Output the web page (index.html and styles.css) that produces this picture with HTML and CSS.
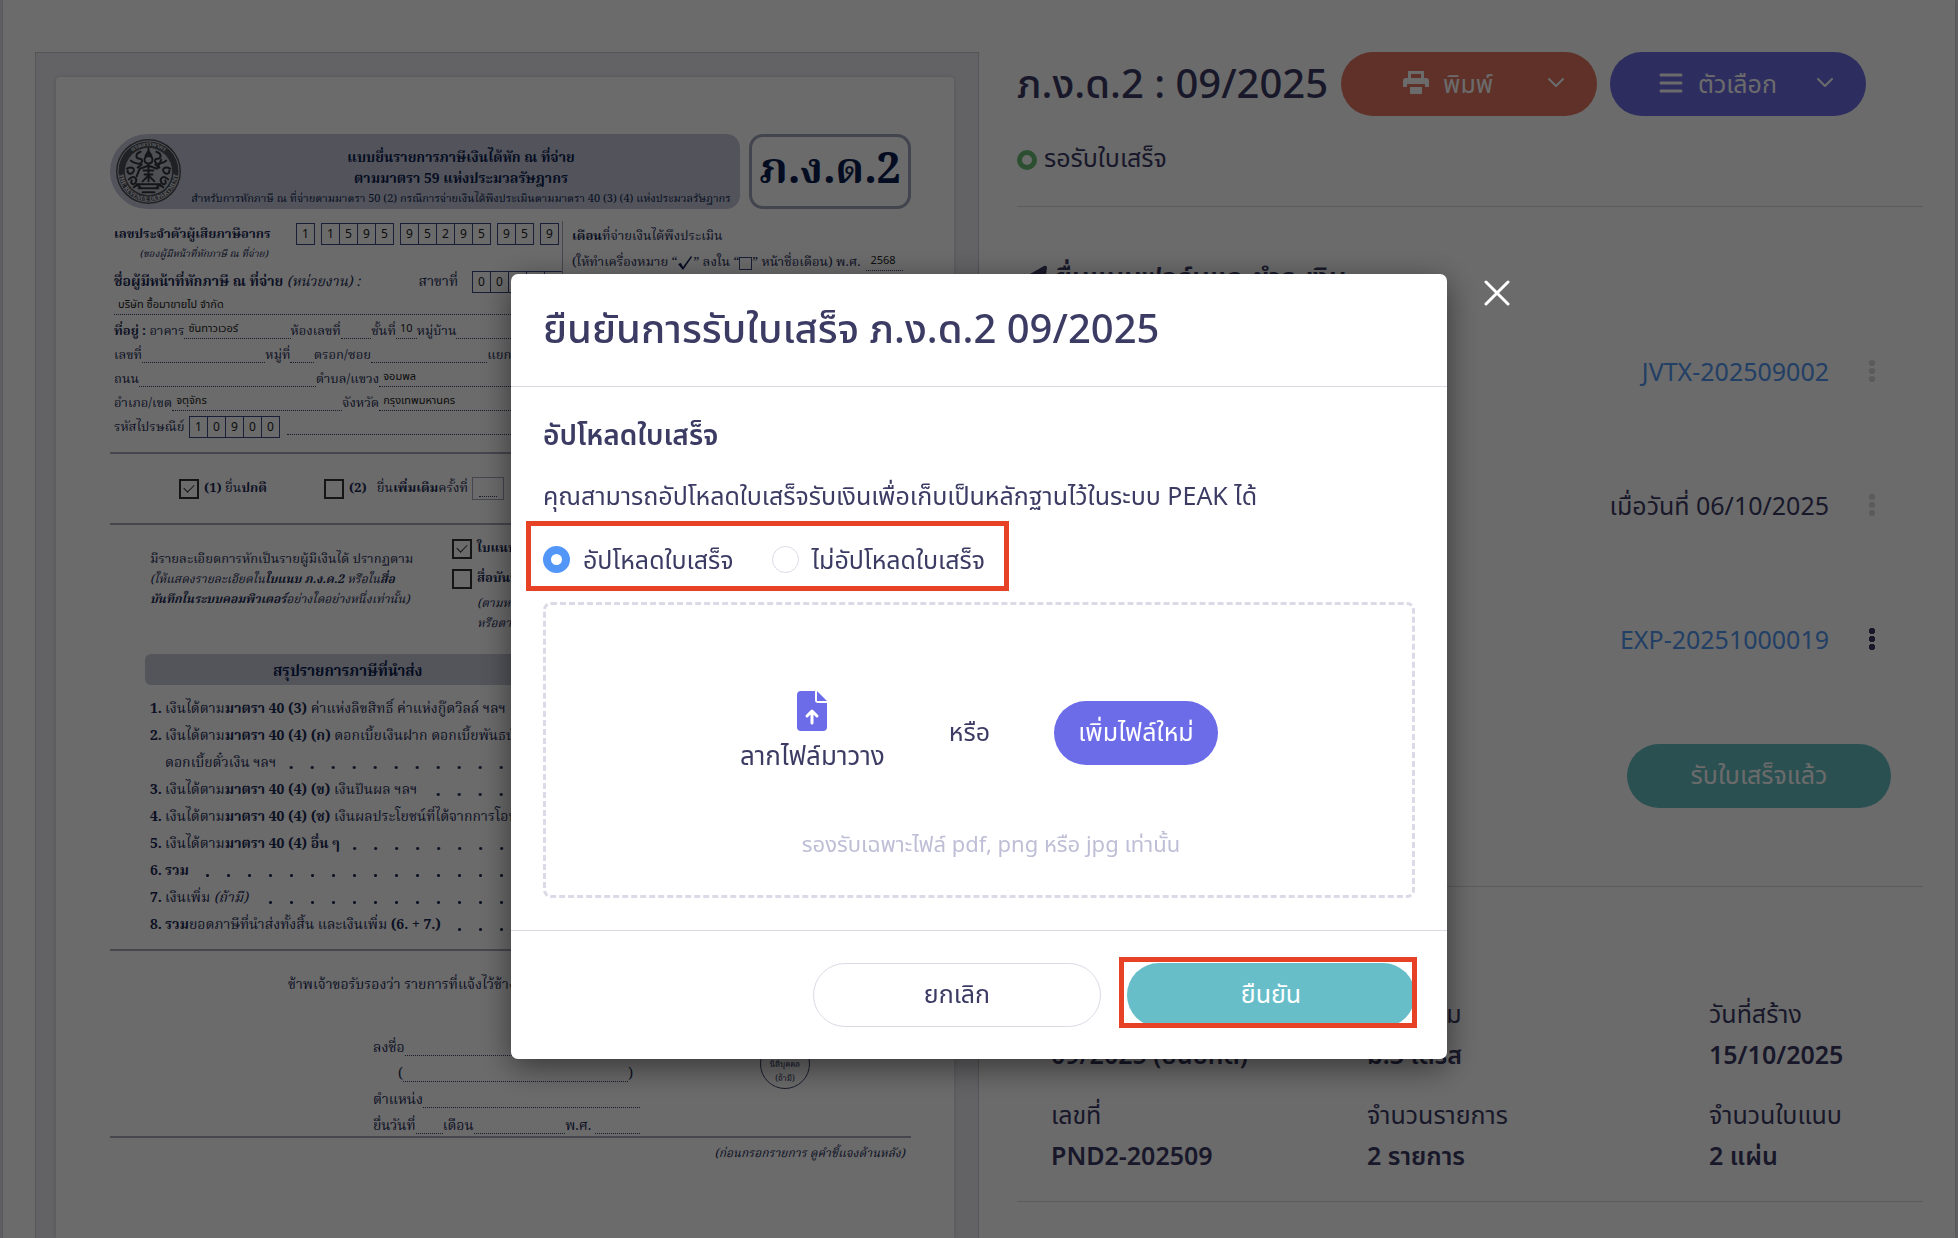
FILE: index.html
```html
<!DOCTYPE html>
<html lang="th">
<head>
    <meta charset="UTF-8">
    <meta name="viewport" content="width=device-width, initial-scale=1.0">
    <title>ภ.ง.ด.2 : 09/2025</title>
    <link rel="stylesheet" href="styles.css">
</head>
<body>
    <main class="page">
        <section class="preview">
            <article class="paper">
                <header class="form-head">
                    <div class="form-band">
                        <svg class="seal" viewBox="0 0 68 68">
                            <circle cx="34" cy="34" r="33" fill="#4d5058"/>
                            <circle cx="34" cy="34" r="31" fill="none" stroke="#c5c8d2" stroke-width="1"/>
                            <circle cx="34" cy="34" r="24" fill="#b9bcc6"/>
                            <path id="arcTop" d="M8 34a26 26 0 0 1 52 0" fill="none"/>
                            <path id="arcBottom" d="M4 34a30 30 0 0 0 60 0" fill="none"/>
                            <text class="seal-text"><textPath href="#arcTop" startOffset="50%">กรมสรรพากร</textPath></text>
                            <text class="seal-text"><textPath href="#arcBottom" startOffset="50%">THE REVENUE DEPARTMENT</textPath></text>
                            <g fill="none" stroke="#30333b" stroke-width="2" stroke-linecap="round">
                                <path d="M34 11v6M31 18l3-5 3 5M30 22c0-5 8-5 8 0s-8 5-8 0M34 27v17M26 31l8-3 8 3M25 31l-3 8M43 31l4-9"/>
                                <path d="M28 44l6-6 6 6M24 51h20M22 47h24M28 55h12M29 33h10M30 37h8M27 27l-4 3M41 27l4 3"/>
                                <path d="M26 14c-6 2-5 7-1 7s3 6-2 5-7-3-7-3M42 14c6 2 5 7 1 7s-3 6 2 5 7-3 7-3"/>
                                <path d="M12 31c6-3 9 1 6 4s-6 0-5-2M56 31c-6-3-9 1-6 4s6 0 5-2M14 42c5-5 9-1 7 3s-6 1-4-2M54 42c-5-5-9-1-7 3s6 1 4-2M19 50c3-3 6-2 7 1M49 50c-3-3-6-2-7 1"/>
                            </g>
                        </svg>
                        <div class="form-title">
                            <strong>แบบยื่นรายการภาษีเงินได้หัก ณ ที่จ่าย</strong>
                            <strong>ตามมาตรา 59 แห่งประมวลรัษฎากร</strong>
                            <small>สำหรับการหักภาษี ณ ที่จ่ายตามมาตรา 50 (2) กรณีการจ่ายเงินได้พึงประเมินตามมาตรา 40 (3) (4) แห่งประมวลรัษฎากร</small>
                        </div>
                    </div>
                    <div class="form-code">ภ.ง.ด.2</div>
                </header>

                <div class="form-top">
                    <div class="payer">
                        <div class="tax-id">
                            <div class="tax-label">
                                <b>เลขประจำตัวผู้เสียภาษีอากร</b>
                                <i>(ของผู้มีหน้าที่หักภาษี ณ ที่จ่าย)</i>
                            </div>
                            <span class="digits"><span>1</span></span>
                            <span class="digits"><span>1</span><span>5</span><span>9</span><span>5</span></span>
                            <span class="digits"><span>9</span><span>5</span><span>2</span><span>9</span><span>5</span></span>
                            <span class="digits"><span>9</span><span>5</span></span>
                            <span class="digits"><span>9</span></span>
                        </div>
                        <div class="payer-name">
                            <span><b>ชื่อผู้มีหน้าที่หักภาษี ณ ที่จ่าย</b> <i>(หน่วยงาน) :</i></span>
                            <span class="branch">สาขาที่</span>
                            <span class="digits"><span>0</span><span>0</span><span>0</span><span>0</span><span>0</span></span>
                        </div>
                        <div class="line"><span class="dots filled">บริษัท ซื้อมาขายไป จำกัด</span></div>
                        <div class="line cols-address">
                            <span class="cell"><b>ที่อยู่ :</b>&nbsp;อาคาร<span class="dots filled">ซันทาวเวอร์</span></span>
                            <span class="cell">ห้องเลขที่<span class="dots"></span></span>
                            <span class="cell">ชั้นที่<span class="dots filled">10</span></span>
                            <span class="cell">หมู่บ้าน<span class="dots"></span></span>
                        </div>
                        <div class="line cols-number">
                            <span class="cell">เลขที่<span class="dots"></span></span>
                            <span class="cell">หมู่ที่<span class="dots"></span></span>
                            <span class="cell">ตรอก/ซอย<span class="dots"></span></span>
                            <span class="cell">แยก<span class="dots"></span></span>
                        </div>
                        <div class="line cols-road">
                            <span class="cell">ถนน<span class="dots"></span></span>
                            <span class="cell">ตำบล/แขวง<span class="dots filled">จอมพล</span></span>
                        </div>
                        <div class="line cols-district">
                            <span class="cell">อำเภอ/เขต<span class="dots filled">จตุจักร</span></span>
                            <span class="cell">จังหวัด<span class="dots filled">กรุงเทพมหานคร</span></span>
                        </div>
                        <div class="line cols-post">
                            <span class="cell">รหัสไปรษณีย์</span>
                            <span class="digits"><span>1</span><span>0</span><span>9</span><span>0</span><span>0</span></span>
                            <span class="dots"></span>
                        </div>
                    </div>
                    <div class="month">
                        <p><b>เดือน</b>ที่จ่ายเงินได้พึงประเมิน</p>
                        <p class="month-mark">(ให้ทำเครื่องหมาย “<svg class="tick" viewBox="0 0 16 14"><path d="M1 8l3-1 2 4L14 0l1 1-9 13z" fill="#0b1d50"/></svg>” ลงใน “<span class="square"></span>” หน้าชื่อเดือน) พ.ศ. <span class="dots filled year">2568</span></p>
                    </div>
                </div>

                <div class="filing">
                    <label><input type="checkbox" class="box" checked> <span><b>(1)</b> ยื่น<b>ปกติ</b></span></label>
                    <label><input type="checkbox" class="box"> <span><b>(2)</b> &nbsp; ยื่น<b>เพิ่มเติม</b>ครั้งที่</span></label>
                    <span class="times"><span class="dots"></span></span>
                </div>

                <div class="attach">
                    <div class="attach-note">
                        <p>มีรายละเอียดการหักเป็นรายผู้มีเงินได้ ปรากฏตาม</p>
                        <p><i>(ให้แสดงรายละเอียดใน<b>ใบแนบ ภ.ง.ด.2</b> หรือใน<b>สื่อ</b></i></p>
                        <p><i><b>บันทึกในระบบคอมพิวเตอร์</b>อย่างใดอย่างหนึ่งเท่านั้น)</i></p>
                    </div>
                    <div class="attach-kind">
                        <label><input type="checkbox" class="box" checked> <b>ใบแนบ ภ.ง.ด.2</b></label>
                        <label><input type="checkbox" class="box"> <b>สื่อบันทึก</b></label>
                        <p><i>(ตามหนังสือแสดงความประสงค์ฯ</i></p>
                        <p><i>หรือตามหนังสือข้อตกลงฯ)</i></p>
                    </div>
                </div>

                <h3 class="summary-head">สรุปรายการภาษีที่นำส่ง</h3>
                <ol class="summary">
                    <li><b>1.</b><span>เงินได้ตาม<b>มาตรา 40 (3)</b> ค่าแห่งลิขสิทธิ์ ค่าแห่งกู๊ดวิลล์ ฯลฯ</span><span class="leader"></span></li>
                    <li><b>2.</b><span>เงินได้ตาม<b>มาตรา 40 (4) (ก)</b> ดอกเบี้ยเงินฝาก ดอกเบี้ยพันธบัตร</span></li>
                    <li><b></b><span>ดอกเบี้ยตั๋วเงิน ฯลฯ</span><span class="leader"></span></li>
                    <li><b>3.</b><span>เงินได้ตาม<b>มาตรา 40 (4) (ข)</b> เงินปันผล ฯลฯ</span><span class="leader"></span></li>
                    <li><b>4.</b><span>เงินได้ตาม<b>มาตรา 40 (4) (ช)</b> เงินผลประโยชน์ที่ได้จากการโอนหุ้น</span></li>
                    <li><b>5.</b><span>เงินได้ตาม<b>มาตรา 40 (4) อื่น ๆ</b></span><span class="leader"></span></li>
                    <li><b>6.</b><span><b>รวม</b></span><span class="leader"></span></li>
                    <li><b>7.</b><span>เงินเพิ่ม <i>(ถ้ามี)</i></span><span class="leader"></span></li>
                    <li><b>8.</b><span><b>รวม</b>ยอดภาษีที่นำส่งทั้งสิ้น และเงินเพิ่ม <b>(6. + 7.)</b></span><span class="leader"></span></li>
                </ol>

                <div class="certify">
                    <p class="certify-text">ข้าพเจ้าขอรับรองว่า รายการที่แจ้งไว้ข้างต้นนี้ เป็นรายการที่ถูกต้อง</p>
                    <div class="sign">
                        <div class="sign-lines">
                            <span class="cell">ลงชื่อ<span class="dots"></span></span>
                            <span class="cell indent">(<span class="dots"></span>)</span>
                            <span class="cell">ตำแหน่ง<span class="dots"></span></span>
                            <span class="cell">ยื่นวันที่<span class="dots day"></span>เดือน<span class="dots"></span>พ.ศ.&nbsp;<span class="dots be"></span></span>
                        </div>
                        <div class="stamp"><span>ประทับตรา</span><span>นิติบุคคล</span><span>(ถ้ามี)</span></div>
                    </div>
                </div>
                <p class="form-foot"><i>(ก่อนกรอกรายการ ดูคำชี้แจงด้านหลัง)</i></p>
            </article>
        </section>

        <section class="detail">
            <div class="detail-head">
                <h1>ภ.ง.ด.2 : 09/2025</h1>
                <button type="button" class="btn btn-print">
                    <svg class="icon" viewBox="0 0 26 26"><path d="M5 1h16v8H5zM8 4v4h10V4z" fill="currentColor" fill-rule="evenodd"/><path d="M3 8h20a3 3 0 0 1 3 3v6h-4v-3H4v3H0v-6a3 3 0 0 1 3-3z" fill="currentColor"/><path d="M7 17h12v7H7z" fill="currentColor"/></svg>
                    <span>พิมพ์</span>
                    <svg class="chevron" viewBox="0 0 16 10"><path d="M1 1l7 7 7-7" fill="none" stroke="currentColor" stroke-width="2" stroke-linecap="round" stroke-linejoin="round"/></svg>
                </button>
                <button type="button" class="btn btn-options">
                    <svg class="icon" viewBox="0 0 26 26"><path d="M3 5h20M3 13h20M3 21h20" stroke="currentColor" stroke-width="3" stroke-linecap="round"/></svg>
                    <span>ตัวเลือก</span>
                    <svg class="chevron" viewBox="0 0 16 10"><path d="M1 1l7 7 7-7" fill="none" stroke="currentColor" stroke-width="2" stroke-linecap="round" stroke-linejoin="round"/></svg>
                </button>
            </div>
            <p class="status">รอรับใบเสร็จ</p>

            <div class="steps">
                <h2><svg class="send" viewBox="0 0 24 24"><path d="M0 13L21 1q3-1 3 2l-3 19-8-4-4 5v-7z" fill="currentColor"/></svg>ยื่นแบบฟอร์มและชำระเงิน</h2>
                <div class="step">
                    <span class="step-name">บันทึกภาษีหัก ณ ที่จ่ายรอนำส่งเรียบร้อย</span>
                    <a href="#">JVTX-202509002</a>
                    <button type="button" class="dots-menu" aria-label="เมนู" disabled></button>
                </div>
                <div class="step">
                    <span class="step-name">ยื่นแบบ</span>
                    <span>เมื่อวันที่ 06/10/2025</span>
                    <button type="button" class="dots-menu" aria-label="เมนู" disabled></button>
                </div>
                <div class="step">
                    <span class="step-name">ชำระเงิน</span>
                    <a href="#">EXP-20251000019</a>
                    <button type="button" class="dots-menu" aria-label="เมนู"></button>
                </div>
                <button type="button" class="btn btn-received">รับใบเสร็จแล้ว</button>
            </div>

            <dl class="info">
                <div><dt>งวดภาษี</dt><dd>09/2025 (ยื่นปกติ)</dd></div>
                <div><dt>นำส่งตาม</dt><dd>ม.3 เตรส</dd></div>
                <div><dt>วันที่สร้าง</dt><dd>15/10/2025</dd></div>
                <div><dt>เลขที่</dt><dd>PND2-202509</dd></div>
                <div><dt>จำนวนรายการ</dt><dd>2 รายการ</dd></div>
                <div><dt>จำนวนใบแนบ</dt><dd>2 แผ่น</dd></div>
            </dl>
        </section>
    </main>

    <div class="overlay">
        <form class="modal" role="dialog" aria-labelledby="modalTitle">
            <button type="button" class="close" aria-label="ปิด">
                <svg viewBox="0 0 26 26"><path d="M2 2l22 22M24 2L2 24" stroke="#fff" stroke-width="3" stroke-linecap="round"/></svg>
            </button>
            <header class="modal-head">
                <h2 id="modalTitle">ยืนยันการรับใบเสร็จ ภ.ง.ด.2 09/2025</h2>
            </header>
            <div class="modal-body">
                <h3>อัปโหลดใบเสร็จ</h3>
                <p class="hint">คุณสามารถอัปโหลดใบเสร็จรับเงินเพื่อเก็บเป็นหลักฐานไว้ในระบบ PEAK ได้</p>
                <div class="choices marked">
                    <label><input type="radio" name="upload" value="yes" checked> อัปโหลดใบเสร็จ</label>
                    <label><input type="radio" name="upload" value="no"> ไม่อัปโหลดใบเสร็จ</label>
                </div>
                <div class="dropzone">
                    <div class="drop-row">
                        <div class="drag">
                            <svg viewBox="0 0 30 40"><path d="M4 0h14v9a3 3 0 0 0 3 3h9v24a4 4 0 0 1-4 4H4a4 4 0 0 1-4-4V4a4 4 0 0 1 4-4z" fill="#6c6ce8"/><path d="M20 0l10 10H20z" fill="#6c6ce8"/><path d="M15 32V20M10 25l5-5 5 5" fill="none" stroke="#fff" stroke-width="3" stroke-linecap="round" stroke-linejoin="round"/></svg>
                            <span>ลากไฟล์มาวาง</span>
                        </div>
                        <span class="or">หรือ</span>
                        <button type="button" class="btn btn-file">เพิ่มไฟล์ใหม่</button>
                    </div>
                    <p class="types">รองรับเฉพาะไฟล์ pdf, png หรือ jpg เท่านั้น</p>
                </div>
            </div>
            <footer class="modal-foot">
                <button type="button" class="btn btn-cancel">ยกเลิก</button>
                <div class="marked"><button type="submit" class="btn btn-confirm">ยืนยัน</button></div>
            </footer>
        </form>
    </div>
</body>
</html>
```
FILE: styles.css
```css
*, *::before, *::after {
    box-sizing: border-box;
}
body {
    margin: 0;
    height: 100vh;
    overflow: hidden;
    background-color: #e8e8ee;
    font-family: "Noto Sans", "Noto Sans Thai", sans-serif;
    font-size: 25px;
    line-height: 40px;
    color: #3b3b64;
}
h1, h2, h3, p, dl, dd, ol {
    margin: 0;
    padding: 0;
}
button {
    font: inherit;
    cursor: pointer;
}
a {
    color: #5296f0;
    text-decoration: none;
}
.page {
    display: grid;
    grid-template-columns: minmax(0, 1fr) minmax(0, 1fr);
    margin: 0 3px;
    padding: 52px 32px 0;
    height: 100vh;
    background-color: #fff;
    box-shadow: 0 0 4px rgba(0, 0, 0, 0.2);
}

/* tax form preview */
.preview {
    padding: 24px 24px 0 20px;
    border: 1px solid #cacacf;
    border-bottom: none;
    background-color: #ececf2;
}
.paper {
    height: 100%;
    padding: 57px 43px 0 54px;
    border-radius: 4px 4px 0 0;
    background-color: #fff;
    box-shadow: 0 0 4px rgba(0, 0, 0, 0.15);
    font-family: "Noto Serif Thai", "Liberation Serif", serif;
    font-size: 14px;
    line-height: 24px;
    color: #1c2a55;
    white-space: nowrap;
}
.form-head {
    display: grid;
    grid-template-columns: 1fr 162px;
    gap: 9px;
    height: 75px;
}
.form-band {
    display: flex;
    align-items: center;
    padding-left: 5px;
    border-radius: 38px 14px 14px 38px;
    background-color: #c5c8d8;
}
.seal {
    width: 67px;
    height: 67px;
}
.seal-text {
    font-size: 6px;
    font-weight: bold;
    text-anchor: middle;
    fill: #e5e7ee;
}
.form-title {
    flex: 1;
    display: flex;
    flex-direction: column;
    align-items: center;
    padding-top: 12px;
    color: #0b1d50;
    line-height: 21px;
}
.form-title small {
    font-size: 11px;
    line-height: 18px;
}
.form-code {
    display: flex;
    align-items: center;
    justify-content: center;
    border: 3px solid #9da2ba;
    border-radius: 14px;
    color: #0b1d50;
    font-size: 43px;
    font-weight: bold;
}
.form-top {
    display: grid;
    grid-template-columns: 452px 1fr;
    margin-top: 12px;
    height: 233px;
    border-bottom: 2px solid #a5a8ba;
}
.payer {
    padding: 2px 3px 0 4px;
}
.tax-id {
    display: flex;
    align-items: flex-start;
    gap: 6px;
    height: 45px;
}
.tax-label {
    display: flex;
    flex-direction: column;
    width: 178px;
    font-size: 13px;
}
.tax-label i {
    padding-right: 22px;
    font-size: 10px;
    line-height: 14px;
    text-align: right;
}
.digits {
    display: inline-flex;
    flex: none;
    border: 1px solid #3c4a80;
    font-family: "Noto Sans", sans-serif;
    font-size: 12px;
    line-height: 20px;
    color: #222;
}
.digits span {
    width: 17px;
    text-align: center;
}
.digits span + span {
    width: 18px;
    border-left: 1px solid #3c4a80;
}
.payer-name {
    display: flex;
    gap: 14px;
    align-items: center;
    height: 28px;
}
.payer-name .digits {
    margin-right: -4px;
}
.branch {
    margin-left: auto;
}
.line {
    display: grid;
    height: 24px;
    align-items: end;
    font-size: 13px;
}
.cell {
    display: flex;
    align-items: flex-end;
}
.dots {
    flex: 1;
    height: 19px;
    margin-bottom: 5px;
    border-bottom: 1px dotted #3b4668;
}
.filled {
    padding-left: 4px;
    font-family: "Noto Sans", "Noto Sans Thai", sans-serif;
    font-size: 11px;
    line-height: 16px;
    color: #222;
}
.cols-address {
    grid-template-columns: 175fr 80fr 45fr 141fr;
}
.cols-number {
    grid-template-columns: 150fr 48fr 172fr 71fr;
}
.cols-road {
    grid-template-columns: 200fr 241fr;
}
.cols-district {
    grid-template-columns: 226fr 215fr;
}
.cols-post {
    grid-template-columns: 75px auto 1fr;
}
.cols-post .digits {
    align-self: start;
    margin-right: 7px;
}
.month {
    padding: 4px 0 0 9px;
    border-left: 1px solid #a5a8ba;
    font-size: 13px;
}
.month-mark {
    display: flex;
    align-items: center;
    margin-top: 2px;
}
.tick {
    width: 16px;
    height: 14px;
}
.square {
    width: 13px;
    height: 13px;
    border: 1px solid #3c4a80;
}
.year {
    margin: 0 8px 4px 6px;
}
.filing {
    display: flex;
    align-items: center;
    height: 71px;
    padding: 0 0 0 69px;
    border-bottom: 2px solid #a5a8ba;
    font-size: 13px;
}
.filing label {
    display: flex;
    align-items: center;
    gap: 5px;
    width: 145px;
}
.filing label + label {
    width: auto;
}
.box {
    appearance: none;
    flex: none;
    display: grid;
    place-items: center;
    width: 20px;
    height: 20px;
    margin: 0;
    border: 2px solid #333;
}
.box:checked::before {
    content: "";
    width: 10px;
    height: 6px;
    margin-bottom: 4px;
    border: solid #333;
    border-width: 0 0 1px 1px;
    transform: rotate(-45deg);
}
.times {
    width: 32px;
    height: 23px;
    margin-left: 4px;
    padding: 0 6px;
    border: 1px solid #a5a8ba;
}
.times .dots {
    display: block;
}
.attach {
    display: grid;
    grid-template-columns: 302px 1fr;
    padding: 9px 0 0 40px;
    height: 129px;
    font-size: 13px;
    line-height: 20px;
}
.attach-note {
    padding-top: 16px;
}
.attach i {
    font-size: 12px;
}
.attach-kind label {
    display: flex;
    align-items: center;
    gap: 5px;
    height: 30px;
}
.attach-kind p {
    padding-left: 25px;
}
.summary-head {
    margin: 0 0 11px 35px;
    padding: 5px 0 0 128px;
    border-radius: 6px;
    background-color: #c8cad8;
    color: #0b1d50;
    font-size: 15px;
    line-height: 26px;
}
.summary {
    padding-left: 40px;
    height: 255px;
    border-bottom: 2px solid #a5a8ba;
    list-style: none;
    line-height: 27px;
}
.summary li {
    display: flex;
}
.summary li > b {
    width: 15px;
}
.leader {
    flex: 1;
    height: 3px;
    margin: 16px 0 0 10px;
    background: radial-gradient(circle, #1c2a55 1px, transparent 2px) right / 21px 3px;
}
.certify {
    height: 187px;
    padding-top: 22px;
    border-bottom: 2px solid #a5a8ba;
}
.certify-text {
    padding-left: 178px;
}
.sign {
    display: flex;
    align-items: flex-start;
    gap: 120px;
    padding: 38px 0 0 263px;
    line-height: 26px;
}
.sign-lines {
    width: 267px;
}
.indent {
    padding: 0 7px 0 25px;
}
.day {
    flex: 0 0 27px;
}
.be {
    flex: 0 0 45px;
}
.stamp {
    display: flex;
    flex-direction: column;
    align-items: center;
    width: 50px;
    height: 50px;
    margin-top: 4px;
    padding-top: 4px;
    border: 1px solid #3b4668;
    border-radius: 50%;
    font-size: 8px;
    line-height: 14px;
}
.form-foot {
    padding: 4px 6px 0;
    font-size: 12px;
    text-align: right;
}

/* document details */
.detail {
    padding-left: 38px;
}
.detail-head {
    display: flex;
    align-items: center;
    gap: 13px;
}
.detail-head h1 {
    width: 311px;
    padding-bottom: 2px;
    font-size: 40px;
    font-weight: 500;
    line-height: 62px;
    white-space: nowrap;
}
.btn {
    display: flex;
    flex: none;
    align-items: center;
    justify-content: center;
    height: 64px;
    padding: 0 0 5px;
    border: none;
    border-radius: 32px;
    color: #fff;
}
.btn-print,
.btn-options {
    width: 256px;
    gap: 14px;
    padding: 0 33px 2px 48px;
}
.btn-print {
    padding-left: 62px;
    background-color: #e27562;
}
.btn-options {
    background-color: #6c6ce4;
}
.icon {
    width: 26px;
    height: 26px;
}
.chevron {
    width: 16px;
    height: 10px;
    margin-left: auto;
}
.status {
    display: flex;
    align-items: center;
    gap: 7px;
    height: 91px;
    padding-bottom: 8px;
    border-bottom: 1px solid #d9d9dc;
}
.status::before {
    content: "";
    width: 20px;
    height: 20px;
    margin-top: 6px;
    border: 5px solid #67bd73;
    border-radius: 50%;
}
.steps {
    height: 680px;
    padding: 50px 32px 0 0;
    border-bottom: 1px solid #d9d9dc;
}
.steps h2 {
    display: flex;
    align-items: center;
    gap: 8px;
    padding: 0 0 7px 6px;
    font-size: 28px;
    font-weight: 600;
}
.send {
    width: 24px;
    height: 24px;
}
.step {
    display: flex;
    align-items: center;
    justify-content: flex-end;
    height: 134px;
    padding-right: 8px;
}
.step-name {
    width: 400px;
    margin-right: auto;
    text-align: right;
}
.dots-menu {
    width: 6px;
    height: 24px;
    margin: 0 8px 0 40px;
    padding: 0;
    border: none;
    background: radial-gradient(circle, #3b3b64 3px, transparent 3px) center / 6px 8px;
}
.dots-menu:disabled {
    opacity: 0.2;
}
.btn-received {
    width: 264px;
    margin: 38px 0 0 auto;
    background-color: #67bec3;
}
.info {
    display: grid;
    grid-template-columns: 316fr 342fr 214fr;
    row-gap: 20px;
    padding: 106px 0 26px 34px;
    border-bottom: 1px solid #d9d9dc;
}
.info dd {
    padding-top: 1px;
    font-weight: 600;
}

/* receipt modal */
.overlay {
    position: fixed;
    inset: 0;
    display: flex;
    align-items: flex-start;
    justify-content: center;
    padding-top: 274px;
    background-color: rgba(0, 0, 0, 0.58);
}
.modal {
    position: relative;
    width: 936px;
    border-radius: 7px;
    background-color: #fff;
    box-shadow: 0 8px 32px rgba(0, 0, 0, 0.5);
}
.close {
    position: absolute;
    top: 6px;
    right: -63px;
    width: 26px;
    height: 26px;
    padding: 0;
    border: none;
    background: none;
}
.close svg {
    display: block;
}
.modal-head {
    padding: 22px 32px 26px;
    border-bottom: 1px solid #dcdae6;
}
.modal-head h2 {
    font-size: 40px;
    font-weight: 500;
    line-height: 64px;
}
.modal-body {
    padding: 27px 32px 32px;
}
.modal-body h3 {
    font-size: 28px;
    font-weight: 600;
}
.hint {
    margin-top: 21px;
}
.marked {
    position: relative;
}
.marked::after {
    content: "";
    position: absolute;
    inset: -6px -2px -1px -8px;
    border: 5px solid #e84226;
    pointer-events: none;
}
.choices {
    display: flex;
    gap: 38px;
    width: fit-content;
    margin: 24px 0 23px;
}
.choices::after {
    inset: -18px -24px -12px -17px;
}
.choices label {
    display: flex;
    align-items: center;
    gap: 13px;
}
.choices input {
    appearance: none;
    width: 27px;
    height: 27px;
    margin: 0;
    border: 1px solid #dcdae6;
    border-radius: 50%;
}
.choices input:checked {
    border: 8px solid #5296f8;
}
.dropzone {
    height: 296px;
    padding-top: 86px;
    border: 3px dashed #dcdae6;
    border-radius: 8px;
}
.drop-row {
    display: flex;
    justify-content: center;
    align-items: center;
}
.drag {
    display: flex;
    flex-direction: column;
    align-items: center;
    font-size: 26px;
}
.drag svg {
    width: 30px;
    height: 40px;
    margin-bottom: 4px;
}
.or {
    margin: 0 64px;
    padding-bottom: 4px;
}
.btn-file {
    width: 164px;
    background-color: #6c6ce8;
}
.types {
    margin-top: 52px;
    padding-left: 24px;
    color: #bebed6;
    font-size: 22px;
    line-height: 32px;
    text-align: center;
}
.modal-foot {
    display: flex;
    justify-content: flex-end;
    gap: 26px;
    padding: 32px;
    border-top: 1px solid #dcdae6;
}
.btn-cancel,
.btn-confirm {
    width: 288px;
}
.btn-cancel {
    border: 1px solid #dcdae6;
    background-color: #fff;
    color: #3b3b64;
}
.btn-confirm {
    background-color: #67bec9;
}
```
